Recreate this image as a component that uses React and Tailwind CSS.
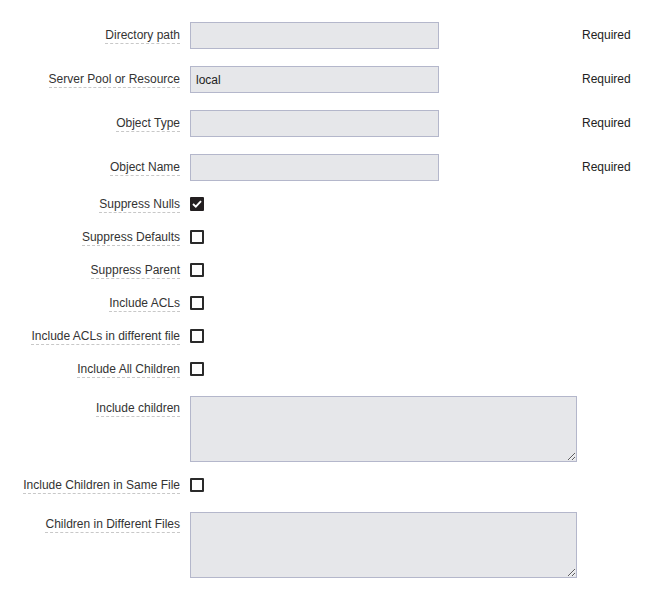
import React from "react";

function Label({ children, top, up }) {
  return (
    <div className={`w-[180px] shrink-0 text-right ${top ? "self-start pt-[3px]" : ""} ${up ? "mb-[2px]" : ""}`}>
      <span className="border-b border-dashed border-[#c8c8c8] pb-[1px] leading-[14px]">{children}</span>
    </div>
  );
}

function InputRow({ label, value, mt }) {
  return (
    <div className={`flex items-center ${mt}`}>
      <Label up>{label}</Label>
      <input
        readOnly
        value={value || ""}
        className="ml-[10px] h-[27px] w-[249px] border border-[#b4b7cb] bg-[#e6e7ea] px-[5px] text-[12px] text-[#222] outline-none"
      />
      <span className="mb-[2px] ml-[143px] text-[#222]">Required</span>
    </div>
  );
}

function Check({ checked }) {
  if (checked) {
    return (
      <div className="flex h-[14px] w-[14px] items-center justify-center rounded-[1px] bg-[#231f20]">
        <svg width="10" height="8" viewBox="0 0 10 8">
          <path d="M1 4 L3.8 6.6 L9 1.2" fill="none" stroke="white" strokeWidth="1.9" />
        </svg>
      </div>
    );
  }
  return <div className="h-[14px] w-[14px] rounded-[1px] border-2 border-[#2a2a2a] bg-white" />;
}

function CheckRow({ label, checked, mt }) {
  return (
    <div className={`flex h-[20px] items-center ${mt}`}>
      <Label>{label}</Label>
      <div className="ml-[10px]">
        <Check checked={checked} />
      </div>
    </div>
  );
}

function TextRow({ label, mt }) {
  return (
    <div className={`flex items-start ${mt}`}>
      <Label top>{label}</Label>
      <textarea
        readOnly
        className="ml-[10px] h-[66px] w-[387px] border border-[#b4b7cb] bg-[#e6e7ea] outline-none"
      />
    </div>
  );
}

export default function App() {
  return (
    <div
      className="flex w-[650px] flex-col bg-white pt-[22px] text-[12px] text-[#333]"
      style={{ fontFamily: '"Liberation Sans", Arial, sans-serif' }}
    >
      <InputRow label="Directory path" />
      <InputRow label="Server Pool or Resource" value="local" mt="mt-[17px]" />
      <InputRow label="Object Type" mt="mt-[17px]" />
      <InputRow label="Object Name" mt="mt-[17px]" />
      <CheckRow label="Suppress Nulls" checked mt="mt-[13px]" />
      <CheckRow label="Suppress Defaults" mt="mt-[13px]" />
      <CheckRow label="Suppress Parent" mt="mt-[13px]" />
      <CheckRow label="Include ACLs" mt="mt-[13px]" />
      <CheckRow label="Include ACLs in different file" mt="mt-[13px]" />
      <CheckRow label="Include All Children" mt="mt-[13px]" />
      <TextRow label="Include children" mt="mt-[17px]" />
      <CheckRow label="Include Children in Same File" mt="mt-[13px]" />
      <TextRow label="Children in Different Files" mt="mt-[17px]" />
    </div>
  );
}
